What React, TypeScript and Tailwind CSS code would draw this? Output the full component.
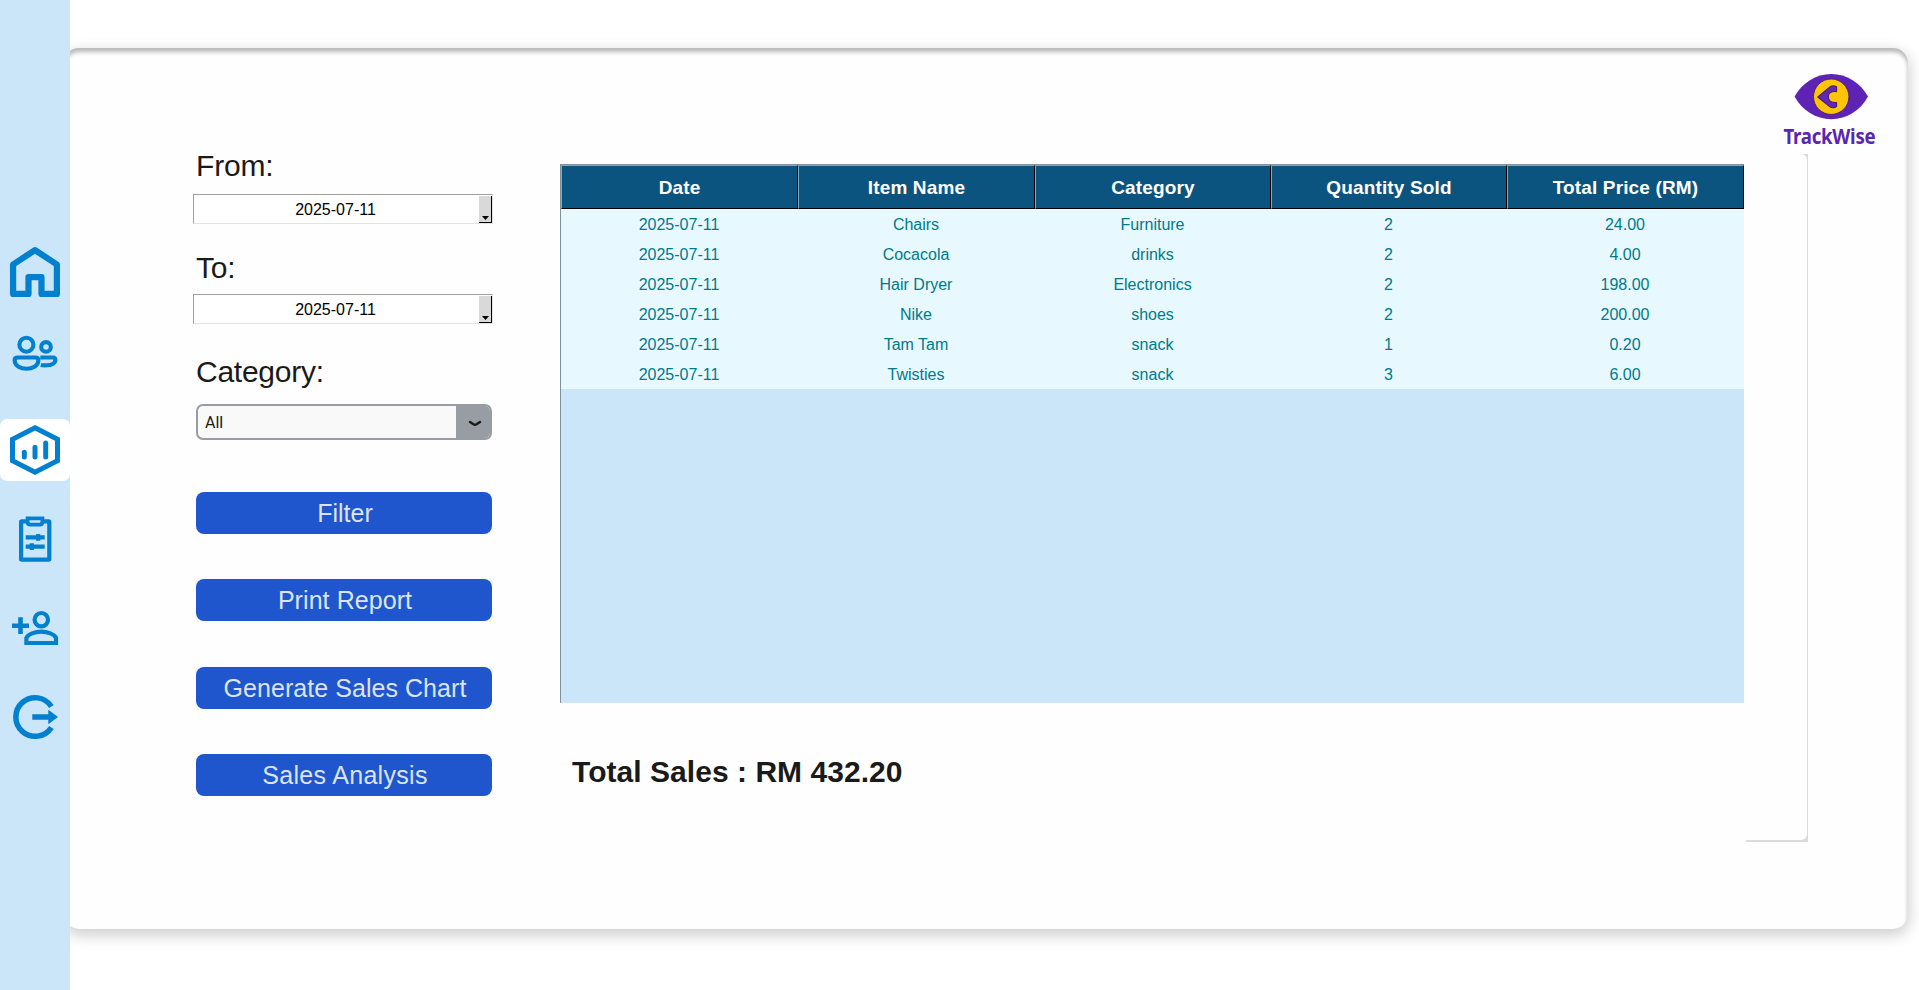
import React from "react";

const BLUE = "#0080cf";

const HomeIcon = () => (
  <svg className="mt-[242px] h-[60px] w-[70px] shrink-0" viewBox="0 242 70 60" fill="none" stroke={BLUE} strokeWidth="6.2" strokeLinejoin="round">
    <path d="M13.1 264.5 L35 250.1 L56.9 264.5 V293.9 H41.5 V277.1 H28.5 V293.9 H13.1 Z" />
  </svg>
);

const UsersIcon = () => (
  <svg className="mt-[28px] h-[50px] w-[70px] shrink-0" viewBox="0 330 70 50" fill="none" stroke={BLUE} strokeWidth="4.1">
    <circle cx="26.4" cy="344.7" r="7" />
    <circle cx="46" cy="346.9" r="4.8" />
    <path d="M17.5 357.5 H35.5 Q38.4 357.5 38.4 360 C38.4 366 32 368.8 26.5 368.8 S14.6 366 14.6 360 Q14.6 357.5 17.5 357.5Z" />
    <path d="M40.3 357.5 H53 Q55.4 357.5 55.4 360 C55.4 363.5 51 365.3 47 365.3 Q43 365.6 40.8 365" />
  </svg>
);

const ReportIcon = () => (
  <div className="mt-[39px] h-[62px] w-[70px] shrink-0 rounded-[7px] bg-white">
    <svg className="h-[62px] w-[70px]" viewBox="0 419 70 62" fill="none" stroke={BLUE} strokeWidth="5">
      <path d="M35 427.8 L57.5 439.3 V460.7 L35 472.2 L12.5 460.7 V439.3 Z" />
      <path d="M24.3 452.3 V456.9 M35 447.3 V456.9 M45.7 443 V456.9" strokeLinecap="round" />
    </svg>
  </div>
);

const ClipboardIcon = () => (
  <svg className="mt-[29px] h-[60px] w-[70px] shrink-0" viewBox="0 510 70 60" fill="none" stroke={BLUE} strokeWidth="4.2">
    <rect x="21.1" y="521.4" width="28.2" height="38.2" rx="0.6" />
    <path d="M27.6 518.3 H42.4 V522 Q42.4 524.7 39.6 524.7 H30.4 Q27.6 524.7 27.6 522 Z" fill="#cce6f9" strokeWidth="3.8" />
    <path d="M25.7 537.4 H44.7 M25.7 546.7 H44.7" />
    <path d="M38.2 534 V540.8 M31.8 543.3 V550.1" />
  </svg>
);

const AddUserIcon = () => (
  <svg className="mt-[35px] h-[45px] w-[70px] shrink-0" viewBox="0 605 70 45" fill="none" stroke={BLUE} strokeWidth="4.2">
    <path d="M12 625.7 H29 M20.5 617.3 V634" strokeWidth="4.6" />
    <circle cx="41.3" cy="619.7" r="6.7" />
    <path d="M26.4 643 V638 C28 634 35 631.7 41.2 631.7 S54.5 634 56 638 V643 Z" />
  </svg>
);

const LogoutIcon = () => (
  <svg className="mt-[40px] h-[55px] w-[70px] shrink-0" viewBox="0 690 70 55" fill="none" stroke={BLUE} strokeWidth="5.5">
    <path d="M51.4 706.6 A19.3 19.3 0 1 0 51.4 727.4" />
    <path d="M32.3 717 H49.5" />
    <path d="M48.3 709.8 L58 717 L48.3 724.2 Z" fill={BLUE} stroke="none" />
  </svg>
);

const Logo = () => (
  <div className="flex w-[100px] flex-col items-center">
    <svg className="h-[48px] w-[76px]" viewBox="1793 73 76 48">
      <path d="M1794.6 96.6 C1802 83 1816 74 1831.3 74 S1860.6 83 1868 96.6 C1860.6 110.5 1846.6 119.3 1831.3 119.3 S1802 110.5 1794.6 96.6Z" fill="#5e22b4" />
      <circle cx="1831.2" cy="96.7" r="17.7" fill="#fdc505" stroke="#4a2070" strokeWidth="0.9" />
      <path d="M1817.8 97 L1829.6 87.2 Q1833 84.8 1836.6 86.8 V91.6 Q1828.4 91 1828.3 97 Q1828.4 103 1836.6 102.6 V106.6 Q1833 109 1829.6 106.6 Z" fill="#6226b8" stroke="#46206a" strokeWidth="1.1" strokeLinejoin="round" />
    </svg>
    <span className="mt-px mr-[3px] scale-x-[0.91] whitespace-nowrap font-['Noto_Sans','Open_Sans',sans-serif] text-[20.5px] font-bold leading-[28px] tracking-[-0.3px] text-[#5b25ad]">TrackWise</span>
  </div>
);

const DateField = ({ value }: { value: string }) => (
  <div className="-ml-[3px] flex h-[30px] w-[300px] border-l border-t border-b border-r border-b-[#e3e3e3] border-l-[#a0a0a0] border-r-[#e3e3e3] border-t-[#a0a0a0] bg-white">
    <span className="w-[286px] pr-[2px] text-center text-[16px] leading-[29px] text-black">{value}</span>
    <span className="mt-px flex h-[27px] w-[13px] shrink-0 items-end justify-center border-b border-r border-black bg-[#d9d9d9]">
      <svg className="mb-[2px] h-[4px] w-[7px]" viewBox="0 0 7 4"><path d="M0 0H7L3.5 4Z" fill="#000" /></svg>
    </span>
  </div>
);

const buttons = [
  { label: "Filter", style: "mt-[52px]" },
  { label: "Print Report", style: "mt-[45px] tracking-[0.07px]" },
  { label: "Generate Sales Chart", style: "mt-[46px] tracking-[0.05px]" },
  { label: "Sales Analysis", style: "mt-[45px] tracking-[0.3px]" },
];

const headers = ["Date", "Item Name", "Category", "Quantity Sold", "Total Price (RM)"];
const rows = [
  ["2025-07-11", "Chairs", "Furniture", "2", "24.00"],
  ["2025-07-11", "Cocacola", "drinks", "2", "4.00"],
  ["2025-07-11", "Hair Dryer", "Electronics", "2", "198.00"],
  ["2025-07-11", "Nike", "shoes", "2", "200.00"],
  ["2025-07-11", "Tam Tam", "snack", "1", "0.20"],
  ["2025-07-11", "Twisties", "snack", "3", "6.00"],
];
const grid = "grid grid-cols-[237px_237px_236px_236px_237px]";

export default function App() {
  return (
    <div className="flex h-[990px] w-[1919px] overflow-hidden bg-white font-['Liberation_Sans',Arial,sans-serif]">
      <nav className="z-10 flex w-[70px] shrink-0 flex-col bg-[#cce6f9]">
        <HomeIcon />
        <UsersIcon />
        <ReportIcon />
        <ClipboardIcon />
        <AddUserIcon />
        <LogoutIcon />
      </nav>

      <main className="-ml-[6px] mt-[48px] flex h-[881px] w-[1844px] shrink-0 rounded-[15px] bg-[#fefefe] pl-[132px] shadow-[0_5px_15px_1px_rgba(0,0,0,0.2),inset_0_4px_4px_rgba(0,0,0,0.28)]">
        <section className="w-[296px] shrink-0 pt-[101px] text-[#1a1a1a]">
          <div className="h-[45px] text-[30px] leading-[34px] tracking-[-0.2px]">From:</div>
          <DateField value="2025-07-11" />
          <div className="mt-[27px] h-[43px] text-[30px] leading-[34px] tracking-[-0.2px]">To:</div>
          <DateField value="2025-07-11" />
          <div className="mt-[31px] h-[49px] text-[30px] leading-[34px] tracking-[-0.25px]">Category:</div>
          <div className="flex h-[36px] overflow-hidden rounded-[7px] border-2 border-[#979da2] bg-[#f9f9fa]">
            <span className="flex-1 pl-[7px] font-[Roboto,sans-serif] text-[16px] leading-[34px]">All</span>
            <span className="flex w-[34px] items-center justify-center bg-[#979da2] pl-[3px]">
              <svg className="mt-[3px] h-[8px] w-[14px]" viewBox="0 0 14 8"><path d="M2 2 L5.5 4.3 Q7 5.2 8.5 4.3 L12 2" fill="none" stroke="#1a1a1a" strokeWidth="2.5" strokeLinecap="round" /></svg>
            </span>
          </div>
          {buttons.map((b) => (
            <button key={b.label} className={`${b.style} block h-[42px] w-[296px] rounded-[8px] bg-[#2056cd] pl-[2px] text-center text-[25px] leading-[42px] text-[#dce4ee]`}>
              {b.label}
            </button>
          ))}
        </section>

        <section className="ml-[68px] w-[1184px] shrink-0 pt-[116px]">
          <div className="h-[539px] border-l border-t border-[#7d929f] bg-[#cce6f9]">
            <div className={`${grid} h-[44px]`}>
              {headers.map((h) => (
                <div key={h} className="h-[44px] overflow-hidden border-b border-l border-r border-t border-b-black border-l-[#85a9c0] border-r-black border-t-[#85a9c0] bg-[#0c5480] text-center text-[19px] font-bold leading-[43px] tracking-[0.14px] text-white">
                  {h}
                </div>
              ))}
            </div>
            {rows.map((r) => (
              <div key={r[1]} className={`${grid} h-[30px] overflow-hidden bg-[#e8f8ff] text-center text-[16px] leading-[32px] text-[#007a8a]`}>
                {r.map((c, i) => (
                  <span key={i} className="pr-px">{c}</span>
                ))}
              </div>
            ))}
          </div>
          <div className="ml-[12px] mt-[52px] text-[30px] font-bold leading-[34px] tracking-[0.04px] text-[#1a1a1a]">Total Sales : RM 432.20</div>
        </section>

        <div className="ml-[2px] mt-[106px] h-[688px] w-[62px] shrink-0 bg-[#dbdbdb] pb-[2px] pr-px">
          <div className="h-full rounded-r-[6px] bg-[#fefefe]" />
        </div>

        <div className="-ml-[27px] h-[110px] shrink-0 pt-[25px]">
          <Logo />
        </div>
      </main>
    </div>
  );
}
